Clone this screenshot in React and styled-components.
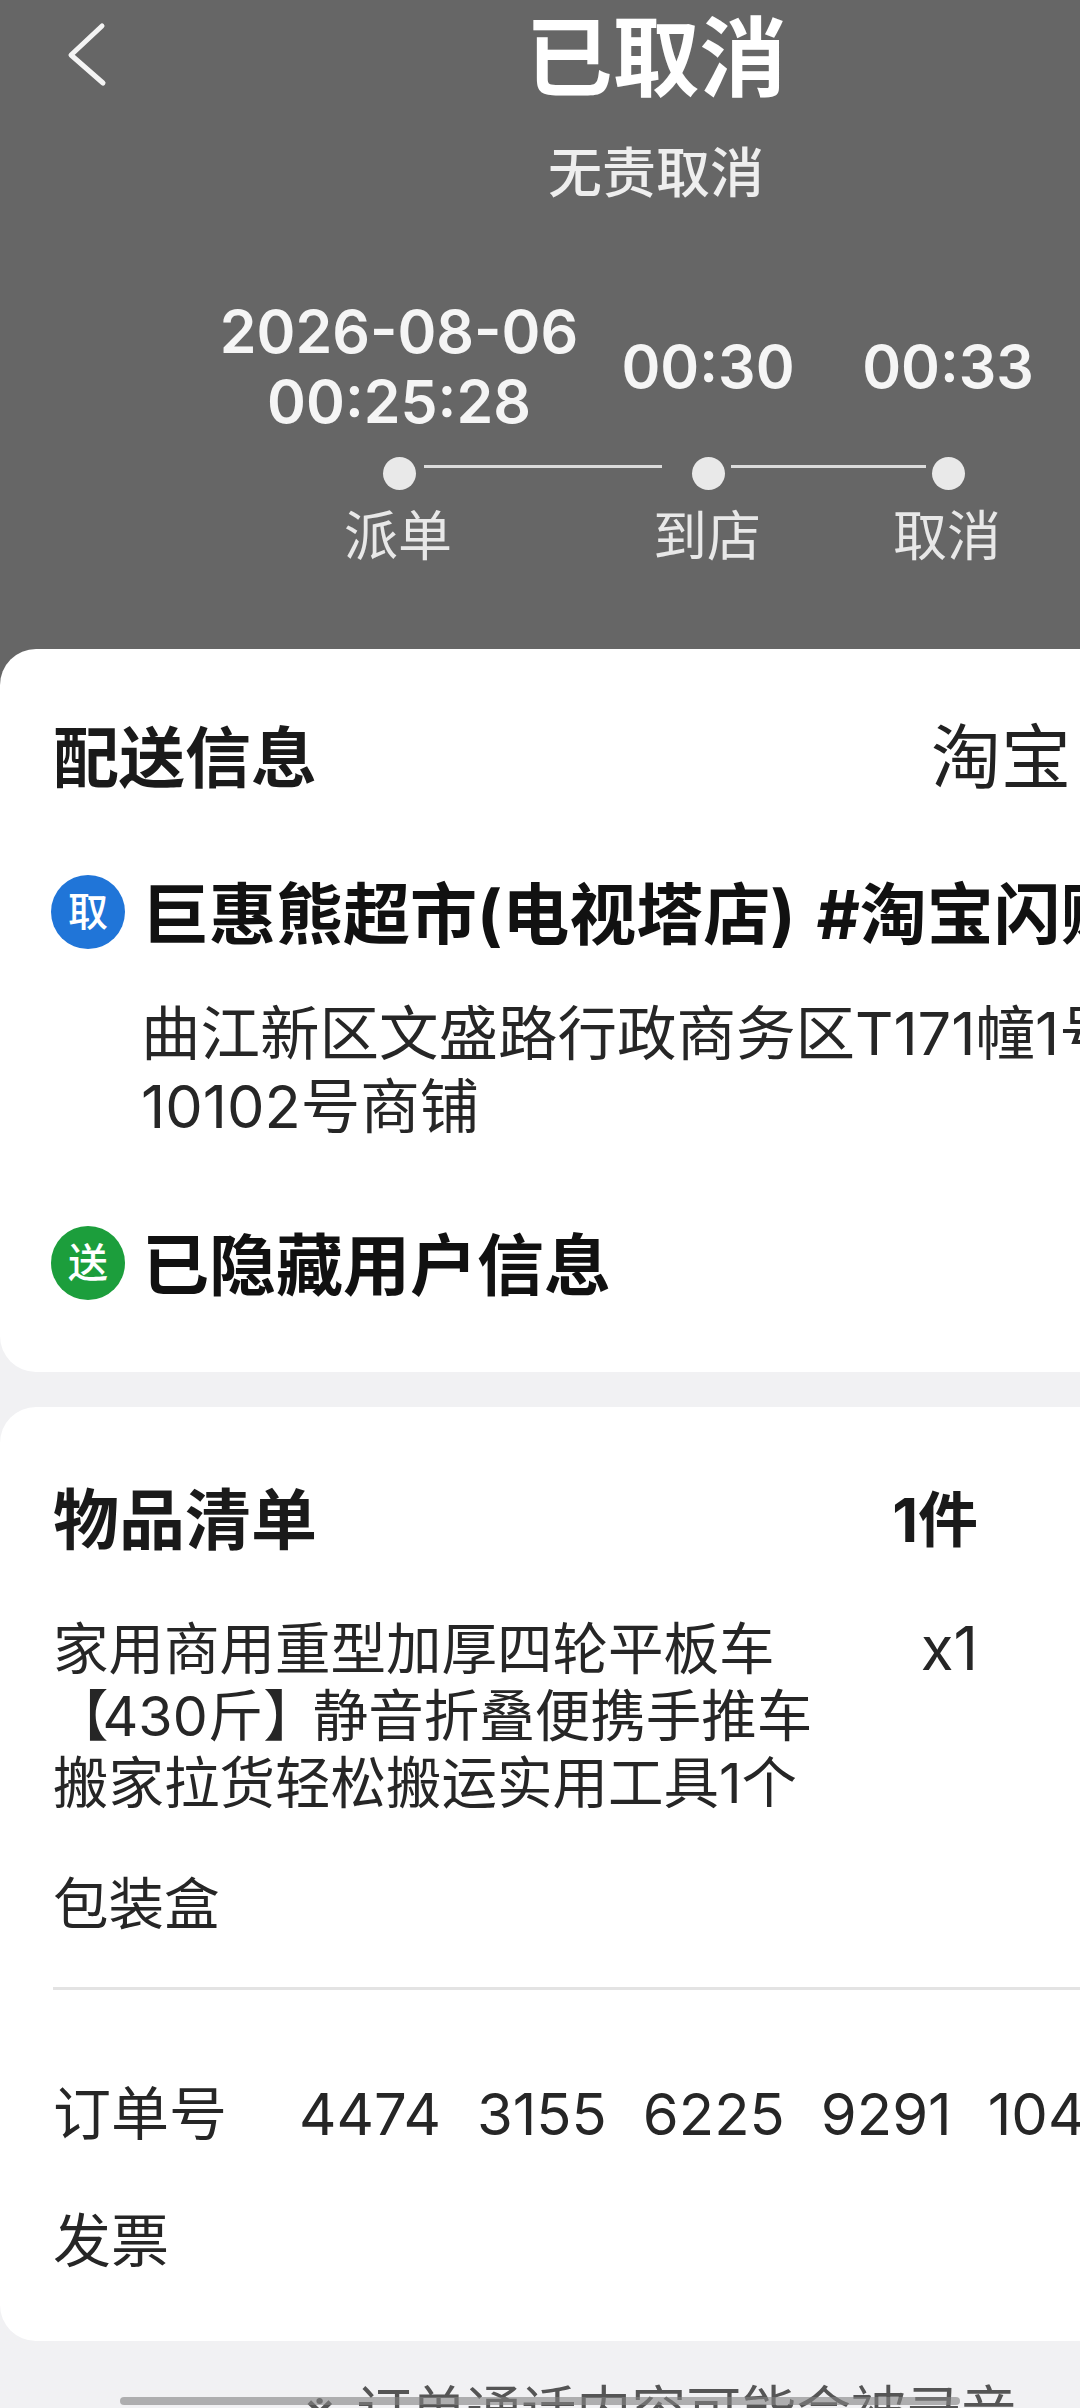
import React from 'react';
import styled, { createGlobalStyle } from 'styled-components';

const GlobalStyle = createGlobalStyle`
  html, body {
    margin: 0;
    padding: 0;
    background: #f1f1f3;
    overflow: hidden;
  }
  body {
    font-family: Inter, "Noto Sans CJK SC", sans-serif;
    color: #1a1a1a;
  }
`;

const Page = styled.div`
  position: relative;
  width: 1080px;
  height: 2408px;
  overflow: hidden;
  background: #f1f1f3;
`;

// the app is laid out wider than the screen, the right side runs off it
const Sheet = styled.div`
  width: 1312px;
`;

const Header = styled.header`
  height: 690px;
  margin-bottom: -41px;
  padding-top: 9px;
  box-sizing: border-box;
  background: #666666;
  color: #ffffff;
`;

const NavBar = styled.div`
  display: grid;
  grid-template-columns: 1fr auto 1fr;
`;

const BackIcon = styled.svg`
  display: block;
  margin: 11px 0 0 64px;
  width: 50px;
  height: 70px;
`;

const Title = styled.h1`
  margin: 0;
  font-size: 87px;
  line-height: 100px;
  font-weight: 700;
`;

const SubTitle = styled.div`
  margin-top: 29px;
  text-align: center;
  font-size: 54px;
  line-height: 72px;
  font-weight: 500;
  color: #eeeeee;
`;

const StepGrid = styled.div`
  display: grid;
  grid-template-columns: 402px 216px 264px;
  padding-left: 198px;
  margin-top: ${(p) => p.$top}px;
  justify-items: center;
  align-items: center;
  white-space: nowrap;
`;

const Stamp = styled.div`
  font-size: 59px;
  line-height: 70px;
  font-weight: 600;
  color: #f5f5f5;
  text-align: center;
`;

const StepLabel = styled.div`
  font-size: 54px;
  line-height: 70px;
  color: #e8e8e8;
  transform: translateX(-1px);
`;

const Rail = styled.div`
  display: flex;
  align-items: center;
  margin-top: 20px;
  padding-left: 383px;
`;

const Dot = styled.span`
  flex: none;
  width: 33px;
  height: 33px;
  border-radius: 50%;
  background: #e9e9e9;
`;

const Track = styled.span`
  flex: none;
  width: ${(p) => p.$w}px;
  height: 3px;
  margin: 0 ${(p) => p.$after}px 14px ${(p) => p.$before}px;
  background: #dcdcdc;
`;

const Card = styled.section`
  background: #ffffff;
  border-radius: 36px;
  padding: ${(p) => p.$top}px 0 0 53px;
  height: ${(p) => p.$height}px;
  box-sizing: border-box;
  margin-bottom: 35px;
`;

const CardHead = styled.div`
  display: flex;
  justify-content: space-between;
  align-items: center;
  padding-right: ${(p) => p.$right}px;
  white-space: nowrap;
`;

const CardTitle = styled.h2`
  margin: 0;
  font-size: 66px;
  line-height: 90px;
  font-weight: 700;
  color: #1a1a1a;
`;

const Source = styled.span`
  font-size: 70px;
  line-height: 90px;
  color: #222222;
`;

const Count = styled.span`
  font-size: 60px;
  line-height: 90px;
  font-weight: 700;
`;

const PartyRow = styled.div`
  display: flex;
  align-items: center;
  gap: 17px;
  margin: ${(p) => p.$top}px 0 0 -2px;
  white-space: nowrap;
`;

const Badge = styled.span`
  flex: none;
  width: 74px;
  height: 74px;
  margin-bottom: 6px;
  border-radius: 50%;
  background: ${(p) => p.$bg};
  color: #ffffff;
  display: flex;
  align-items: center;
  justify-content: center;
  font-size: 40px;
  line-height: 1;
  font-weight: 500;
`;

const PartyName = styled.div`
  font-size: 67px;
  line-height: 90px;
  font-weight: 700;
  word-spacing: 5px;
  color: #111111;
`;

const Address = styled.div`
  margin: 37px 0 0 88px;
  font-size: 59.5px;
  line-height: 73px;
  color: #262626;
  white-space: nowrap;
`;

const ItemRow = styled.div`
  display: flex;
  justify-content: space-between;
  margin-top: 50px;
  padding-right: 334px;
  font-size: 55.5px;
  line-height: 67px;
  color: #262626;
  white-space: nowrap;
`;

const Bracket = styled.span`
  letter-spacing: -6px;
`;

const Quantity = styled.div`
  font-size: 60px;
`;

const Packing = styled.div`
  margin-top: 54px;
  font-size: 55.5px;
  line-height: 67px;
  color: #262626;
`;

const Divider = styled.hr`
  margin: 50px 0 0;
  border: 0;
  height: 3px;
  background: #e3e3e3;
`;

const InfoRow = styled.div`
  display: flex;
  align-items: center;
  gap: 72px;
  margin-top: ${(p) => p.$top}px;
  font-size: 58px;
  line-height: 70px;
  color: #262626;
  white-space: nowrap;
`;

const OrderNumber = styled.span`
  display: flex;
  gap: 36px;
  font-size: 58px;
`;

const Notice = styled.div`
  display: flex;
  gap: 19px;
  margin-top: 1px;
  padding-left: 302px;
  font-size: 55px;
  line-height: 70px;
  color: #555555;
  white-space: nowrap;
`;

const HomeBar = styled.div`
  position: absolute;
  left: 120px;
  bottom: 3px;
  width: 840px;
  height: 8px;
  border-radius: 4px;
  background: rgba(130, 130, 130, 0.6);
`;

const steps = ['派单', '到店', '取消'];
const orderGroups = ['4474', '3155', '6225', '9291', '1048'];

export default function App() {
  return (
    <Page>
      <GlobalStyle />
      <Sheet>
        <Header>
          <NavBar>
            <BackIcon viewBox="0 0 50 70" fill="none">
              <path d="M38 6 L7 35 L39 63" stroke="#f4f4f4" strokeWidth="5" strokeLinecap="round" strokeLinejoin="round" />
            </BackIcon>
            <Title>已取消</Title>
          </NavBar>
          <SubTitle>无责取消</SubTitle>
          <StepGrid $top={87}>
            <Stamp>2026-08-06<br />00:25:28</Stamp>
            <Stamp>00:30</Stamp>
            <Stamp>00:33</Stamp>
          </StepGrid>
          <Rail>
            <Dot />
            <Track $before={8} $after={30} $w={238} />
            <Dot />
            <Track $before={6} $after={6} $w={195} />
            <Dot />
          </Rail>
          <StepGrid $top={12}>
            {steps.map((s) => <StepLabel key={s}>{s}</StepLabel>)}
          </StepGrid>
        </Header>

        <Card $top={64} $height={723}>
          <CardHead $right={241}>
            <CardTitle>配送信息</CardTitle>
            <Source>淘宝</Source>
          </CardHead>
          <PartyRow $top={67}>
            <Badge $bg="#2075d8">取</Badge>
            <PartyName>巨惠熊超市(电视塔店) #淘宝闪购</PartyName>
          </PartyRow>
          <Address>曲江新区文盛路行政商务区T171幢1号楼<br />10102号商铺</Address>
          <PartyRow $top={78}>
            <Badge $bg="#1c9e3c">送</Badge>
            <PartyName>已隐藏用户信息</PartyName>
          </PartyRow>
        </Card>

        <Card $top={68} $height={934}>
          <CardHead $right={334}>
            <CardTitle>物品清单</CardTitle>
            <Count>1件</Count>
          </CardHead>
          <ItemRow>
            <div>
              家用商用重型加厚四轮平板车<br />
              <Bracket>【</Bracket>430斤<Bracket>】</Bracket>静音折叠便携手推车<br />
              搬家拉货轻松搬运实用工具1个
            </div>
            <Quantity>x1</Quantity>
          </ItemRow>
          <Packing>包装盒</Packing>
          <Divider />
          <InfoRow $top={89}>
            <span>订单号</span>
            <OrderNumber>
              {orderGroups.map((g) => <span key={g}>{g}</span>)}
            </OrderNumber>
          </InfoRow>
          <InfoRow $top={57}>发票</InfoRow>
        </Card>

        <Notice>
          <span>※</span>
          <span>订单通话内容可能会被录音</span>
        </Notice>
      </Sheet>
      <HomeBar />
    </Page>
  );
}
